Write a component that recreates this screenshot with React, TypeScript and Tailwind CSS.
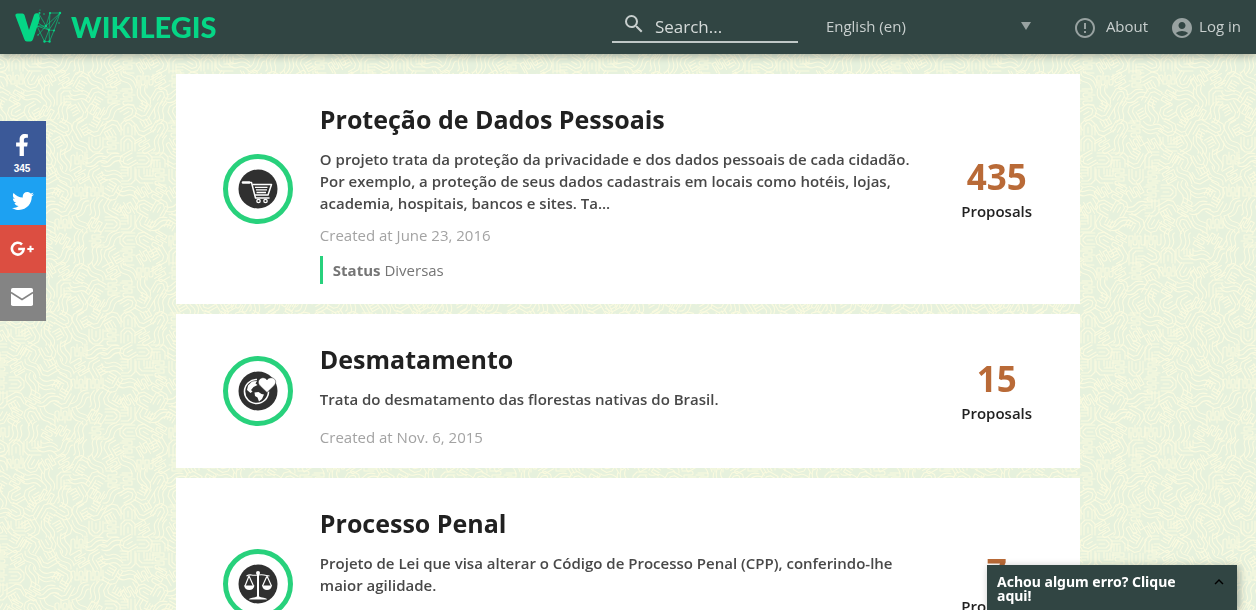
import React from "react";
import { FaFacebookF, FaTwitter } from "react-icons/fa";
import { MdAccountCircle, MdErrorOutline, MdKeyboardArrowUp, MdSearch } from "react-icons/md";

type Bill = {
  title: string;
  text: string;
  created: string;
  status?: string;
  proposals: number;
  icon: React.ReactNode;
};

/* Hand-drawn meanders scattered over a repeating tile. */
const TILE = 192;
const STEP = 16;
const strokes: { d: string; t: string }[] = [];
const shapes = [
  "M-9 6V-3Q-9-5-7-5H-6Q-5-5-5-3V4H-1V-3Q-1-5 1-5T3-3V4H7V-6M-3-8V0M5-8V0M1 0V7",
  "M-9 7Q-3 8-2 1T8-8M-9 3Q-6 3-5-2T3-9M-6 10Q1 9 2 3T10-4",
  "M-9-7H4L8-3V7M-9-3H2L5 0V7M-9 1V8M-6 0V7M-3 0V7M0 2V8M-9 0H0",
  "M-7 7V-4L-3-8H3L7-4V7M-4 7V-2L-1-5H1L4-2V7M0-1V5",
];
let seed = 29;
const rand = () => {
  seed = (seed * 16807) % 2147483647;
  return seed / 2147483647;
};
for (let y = 0; y < TILE; y += STEP) {
  for (let x = 0; x < TILE; x += STEP) {
    const d = shapes[Math.floor(rand() * shapes.length)];
    const angle = Math.floor(rand() * 12) * 30;
    for (const dx of x === 0 ? [0, TILE] : [0]) {
      for (const dy of y === 0 ? [0, TILE] : [0]) {
        strokes.push({ d, t: `translate(${x + dx} ${y + dy}) rotate(${angle})` });
      }
    }
  }
}

function Backdrop() {
  return (
    <svg aria-hidden="true" className="fixed inset-0 -z-10 h-full w-full">
      <defs>
        <pattern id="meander" width={TILE} height={TILE} patternUnits="userSpaceOnUse">
          <rect width={TILE} height={TILE} fill="#e6f1dd" />
          <g fill="none" stroke="#fbfbe0" strokeWidth="1.1" strokeLinecap="round" strokeLinejoin="round">
            {strokes.map((s, i) => (
              <path key={i} d={s.d} transform={s.t} />
            ))}
          </g>
        </pattern>
      </defs>
      <rect width="100%" height="100%" fill="url(#meander)" />
    </svg>
  );
}

function LogoMark() {
  return (
    <svg viewBox="0 0 48 36" className="h-9 w-12" aria-hidden="true">
      <path
        d="M3.500 4.500h5q1.500 0 2 1.500l4.500 15 5-15q.6-1.700 2.300-1.700h2.200l1.500 5-7 21q-.7 2.200-2.600 2.200h-3.600q-1.800 0-2.500-2.200L1.500 7q-.6-2.500 2-2.500z"
        fill="#05d686"
      />
      <g fill="none" stroke="#05d686" strokeWidth=".6">
        <path d="M25 5l7 12 4-13h10l-6 17.500-4.500 11h-5L23 17l9 0 3 4 5 .5M32 17l14-13M36 4l-1 17-4.500 11.500M35 21l.5 11.500M24 26l8-9M25 5l-1 9 11 7M46 4l-11 17M23 17l12 4" />
      </g>
      <g fill="#05d686">
        <circle cx="25.500" cy="4" r="1" />
        <circle cx="26" cy="1" r=".6" />
        <circle cx="30" cy="5" r=".7" />
        <circle cx="36" cy="4" r="1.100" />
        <circle cx="46" cy="4" r="1.200" />
        <circle cx="32" cy="17" r="1.200" />
        <circle cx="35" cy="21" r="1" />
        <circle cx="40" cy="21.500" r="1" />
        <circle cx="45" cy="14" r=".7" />
        <circle cx="30.500" cy="32.500" r="1.200" />
        <circle cx="35.500" cy="32.500" r="1.200" />
        <circle cx="24" cy="26" r=".7" />
      </g>
    </svg>
  );
}

function CartIcon() {
  return (
    <svg viewBox="0 0 40 40" className="size-10" aria-hidden="true">
      <circle cx="20" cy="20" r="19.500" fill="#303030" />
      <g fill="none" stroke="#fff" strokeLinecap="round" strokeLinejoin="round">
        <path d="M5 13.500h6" strokeWidth="2.600" />
        <path d="M11 13.500h2.500L17.500 29H31" strokeWidth="1.500" />
        <path d="M15 15.500h18.500l-3.500 10.500H17.500" strokeWidth="1.500" />
        <path d="M17 18.300h12.500M18 20.900h11M18.500 23.500h9.500" strokeWidth="1.300" strokeLinecap="butt" />
        <circle cx="20.500" cy="32" r="1.700" strokeWidth="1.300" />
        <circle cx="27.500" cy="32" r="1.700" strokeWidth="1.300" />
      </g>
    </svg>
  );
}

function EarthIcon() {
  return (
    <svg viewBox="0 0 40 40" className="size-10" aria-hidden="true">
      <circle cx="20" cy="20" r="19.500" fill="#303030" />
      <path d="M19 8.500a12 12 0 1 0 11.500 12" fill="none" stroke="#fff" strokeWidth="1.600" />
      <path
        d="M19 10l-1.500 2.500 2 1.500-4 2-2.500 3 1.500 1.500-2 1.500-3.500-3 1-4.500 4-4zM16.500 21.500l4-.5 3 2 2.500.5-2 4.500-3 2.500-1.500-4-2.500-1.500z"
        fill="#fff"
      />
      <path
        d="M29 21.500l-7-6.800c-2.300-2.400-2-5.400.2-7 2.200-1.600 5.200-1.100 6.800 1.300 1.600-2.400 4.800-2.900 7-1.300s2.300 4.600 0 7z"
        fill="#fff"
        stroke="#303030"
        strokeWidth=".5"
      />
    </svg>
  );
}

function ScalesIcon() {
  return (
    <svg viewBox="0 0 40 40" className="size-10" aria-hidden="true">
      <circle cx="20" cy="20" r="19.500" fill="#303030" />
      <g fill="none" stroke="#fff" strokeWidth="1.200">
        <path d="M8.500 12q2.500-1.500 5-1t6.500 0 6 0 5.500 1M11 12L7 22M11 12l4.500 10M29 12l-4.500 10M29 12l4.500 10" />
        <path d="M20 9v24" strokeWidth="2" />
      </g>
      <circle cx="20" cy="9" r="2" fill="#fff" />
      <path d="M6 21.500h10.500q-1 4.500-5.200 4.500T6 21.500zM24 21.500h10q-1 4.500-5 4.500t-5-4.500zM11 35.500q0-1.500 6-2.200l3-1.300 3 1.300q6 .7 6 2.200z" fill="#fff" />
    </svg>
  );
}

const bills: Bill[] = [
  {
    title: "Proteção de Dados Pessoais",
    text: "O projeto trata da proteção da privacidade e dos dados pessoais de cada cidadão. Por exemplo, a proteção de seus dados cadastrais em locais como hotéis, lojas, academia, hospitais, bancos e sites. Ta...",
    created: "Created at June 23, 2016",
    status: "Diversas",
    proposals: 435,
    icon: <CartIcon />,
  },
  {
    title: "Desmatamento",
    text: "Trata do desmatamento das florestas nativas do Brasil.",
    created: "Created at Nov. 6, 2015",
    proposals: 15,
    icon: <EarthIcon />,
  },
  {
    title: "Processo Penal",
    text: "Projeto de Lei que visa alterar o Código de Processo Penal (CPP), conferindo-lhe maior agilidade.",
    created: "Created at Nov. 6, 2015",
    status: "Diversas",
    proposals: 7,
    icon: <ScalesIcon />,
  },
];

function BillCard({ bill }: { bill: Bill }) {
  return (
    <article className="flex items-center bg-white pl-[47px]">
      <div className="flex size-[70px] shrink-0 items-center justify-center rounded-full border-[5px] border-[#28d17c]">
        {bill.icon}
      </div>
      <div className="ml-[27px] min-w-0 flex-1 pt-7 pb-5 text-[15px] leading-[22px]">
        <h2 className="mb-3 text-[25px] leading-[34px] font-bold text-[#212121]">
          <a href="#bill">{bill.title}</a>
        </h2>
        <p className={`font-semibold text-[#484848] ${bill.status ? "min-h-12" : "min-h-7"}`}>{bill.text}</p>
        <p className="mt-[10px] text-[#a3a3a3]">{bill.created}</p>
        {bill.status && (
          <p className="mt-[10px] border-l-[3px] border-[#28d17c] py-[3px] pl-[10px] text-[#757575]">
            <strong className="font-bold">Status</strong> {bill.status}
          </p>
        )}
      </div>
      <div className="w-[165px] shrink-0 pr-[2px] pb-[2px] text-center">
        <div className="text-[35px] leading-[46px] font-bold text-[#b96a37]">{bill.proposals}</div>
        <div className="text-[15px] leading-[22px] font-semibold text-[#212121]">Proposals</div>
      </div>
    </article>
  );
}

export default function App() {
  return (
    <div className="min-h-screen font-['Open_Sans',sans-serif]">
      <Backdrop />
      <header className="flex h-[54px] items-center bg-[#314543] pr-[15px] pb-px pl-[14px] text-[15px] font-medium text-[#c8cfce] shadow-[0_2px_8px_rgba(0,0,0,0.3)]">
        <a href="#home" className="flex items-center gap-[9px]">
          <LogoMark />
          <span className="font-[Lato] text-[29px] leading-9 font-black text-[#05d686]">WIKILEGIS</span>
        </a>
        <label className="ml-auto flex h-8 w-[186px] items-center border-b-2 border-[#c0c8c7]">
          <MdSearch className="mb-1 ml-[10px] size-6 shrink-0" />
          <input
            type="search"
            aria-label="Search"
            placeholder="Search..."
            className="ml-[9px] w-full min-w-0 bg-transparent pt-[2px] text-[17px] placeholder:text-[#d6dbda] outline-none"
          />
        </label>
        <div className="relative ml-7 w-[211px]">
          <select aria-label="Language" className="w-full appearance-none bg-transparent outline-none">
            <option>English (en)</option>
          </select>
          <span aria-hidden="true" className="pointer-events-none absolute top-[7px] right-[6px] border-x-[5px] border-t-8 border-x-transparent border-t-[#98a2a1]" />
        </div>
        <a href="#about" className="ml-9 flex items-center gap-[9px]">
          <MdErrorOutline className="mt-[2px] size-6 text-[#98a2a1]" />
          About
        </a>
        <a href="#login" className="ml-[22px] flex items-center gap-[5px]">
          <MdAccountCircle className="mt-[2px] size-6 text-[#98a2a1]" />
          Log in
        </a>
      </header>

      <main className="mx-auto mt-5 flex w-[72%] flex-col gap-[10px] pb-10">
        {bills.map((bill) => (
          <BillCard key={bill.title} bill={bill} />
        ))}
      </main>

      <nav aria-label="Share" className="fixed top-[121px] left-0 flex w-[46px] flex-col text-white">
        <a href="#facebook" aria-label="Facebook" className="flex h-14 flex-col items-center bg-[#3b5998] pt-[13px] pr-[2px]">
          <FaFacebookF className="size-[22px]" />
          <span className="mt-[7px] font-['Liberation_Sans',sans-serif] text-[10px] leading-3 font-bold">345</span>
        </a>
        <a href="#twitter" aria-label="Twitter" className="flex h-12 items-center justify-center bg-[#1da1f2]">
          <FaTwitter className="size-[22px]" />
        </a>
        <a href="#google" aria-label="Google Plus" className="flex h-12 items-center justify-center bg-[#dc4e41] pr-[2px]">
          <svg viewBox="0 0 24 16" className="h-4 w-6" fill="none" stroke="#fff" aria-hidden="true">
            <path d="M12 3.500A5.900 5.900 0 1 0 13.700 8H8.200" strokeWidth="2.600" />
            <path d="M20.500 4.800v6.400M17.300 8h6.400" strokeWidth="2" />
          </svg>
        </a>
        <a href="#email" aria-label="Email" className="flex h-12 items-center justify-center bg-[#848484] pr-[2px]">
          <svg viewBox="0 0 22 18" className="h-[18px] w-[22px]" aria-hidden="true">
            <rect width="22" height="18" rx="1.800" fill="#fff" />
            <path d="M0 4.500l11 7 11-7" fill="none" stroke="#848484" strokeWidth="1.500" />
          </svg>
        </a>
      </nav>

      <button
        type="button"
        className="fixed right-[19px] bottom-0 flex h-[45px] w-[250px] items-start bg-[#314543] pt-[10px] pr-[9px] pl-[10px] text-left font-['Noto_Sans',sans-serif] text-sm leading-[14px] font-bold text-white shadow-[2px_2px_8px_rgba(0,0,0,0.3)]"
      >
        <span className="flex-1 pr-6">Achou algum erro? Clique aqui!</span>
        <MdKeyboardArrowUp className="-mt-[2px] size-[18px] text-black" />
      </button>
    </div>
  );
}
